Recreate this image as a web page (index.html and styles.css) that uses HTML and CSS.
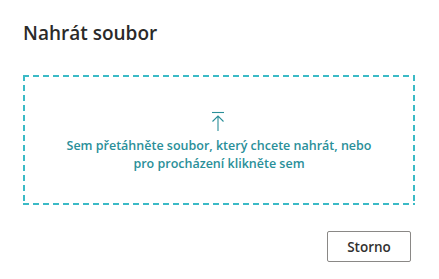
FILE: index.html
```html
<!DOCTYPE html>
<html lang="cs">
<head>
<meta charset="utf-8">
<link rel="stylesheet" href="styles.css">
</head>
<body>
<div class="dialog">
  <h1 class="title">Nahrát soubor</h1>
  <div class="dropzone">
    <svg class="icon" width="14" height="20" viewBox="0 0 14 20">
      <path d="M1 1.5H13" stroke="#2a8f99" stroke-width="1.1" fill="none"/>
      <path d="M7 20V5M1.5 10.5L7 5l5.5 5.5" stroke="#2a8f99" stroke-width="1.1" fill="none"/>
    </svg>
    <p class="hint">Sem přetáhněte soubor, který chcete nahrát, nebo<br>pro procházení klikněte sem</p>
  </div>
  <div class="actions">
    <button class="btn">Storno</button>
  </div>
</div>
</body>
</html>
```
FILE: styles.css
```css
html, body {
  margin: 0;
  padding: 0;
  background: #ffffff;
}
body {
  font-family: "Open Sans", "Noto Sans", sans-serif;
  color: #323130;
}
.dialog {
  width: 439px;
  height: 279px;
  box-sizing: border-box;
  padding: 20px 24px 0 23px;
  display: flex;
  flex-direction: column;
}
.title {
  margin: 0;
  font-size: 19px;
  font-weight: 600;
  line-height: 26px;
  height: 26px;
  color: #2b2a29;
}
.dropzone {
  margin-top: 29px;
  width: 392px;
  height: 130px;
  box-sizing: border-box;
  display: flex;
  flex-direction: column;
  align-items: center;
  justify-content: flex-start;
  padding-top: 36px;
  background:
    repeating-linear-gradient(90deg, #3bbac6 0 6px, transparent 6px 10px) top left / 100% 2px no-repeat,
    repeating-linear-gradient(90deg, #3bbac6 0 6px, transparent 6px 10px) bottom left / 100% 2px no-repeat,
    repeating-linear-gradient(180deg, #3bbac6 0 6px, transparent 6px 10px) top left / 2px 100% no-repeat,
    repeating-linear-gradient(180deg, #3bbac6 0 6px, transparent 6px 10px) top right / 2px 100% no-repeat;
}
.icon {
  display: block;
  margin-left: -2px;
}
.hint {
  margin: 6px 0 0;
  font-size: 12.5px;
  font-weight: 600;
  line-height: 18px;
  text-align: center;
  color: #2a8f99;
}
.actions {
  display: flex;
  justify-content: flex-end;
  margin-top: 26px;
  padding-right: 4px;
}
.btn {
  width: 84px;
  height: 31px;
  border: 1px solid #8a8886;
  border-radius: 2px;
  background: #ffffff;
  font-family: inherit;
  font-size: 13.5px;
  font-weight: 600;
  color: #323130;
  padding: 0;
}
```
